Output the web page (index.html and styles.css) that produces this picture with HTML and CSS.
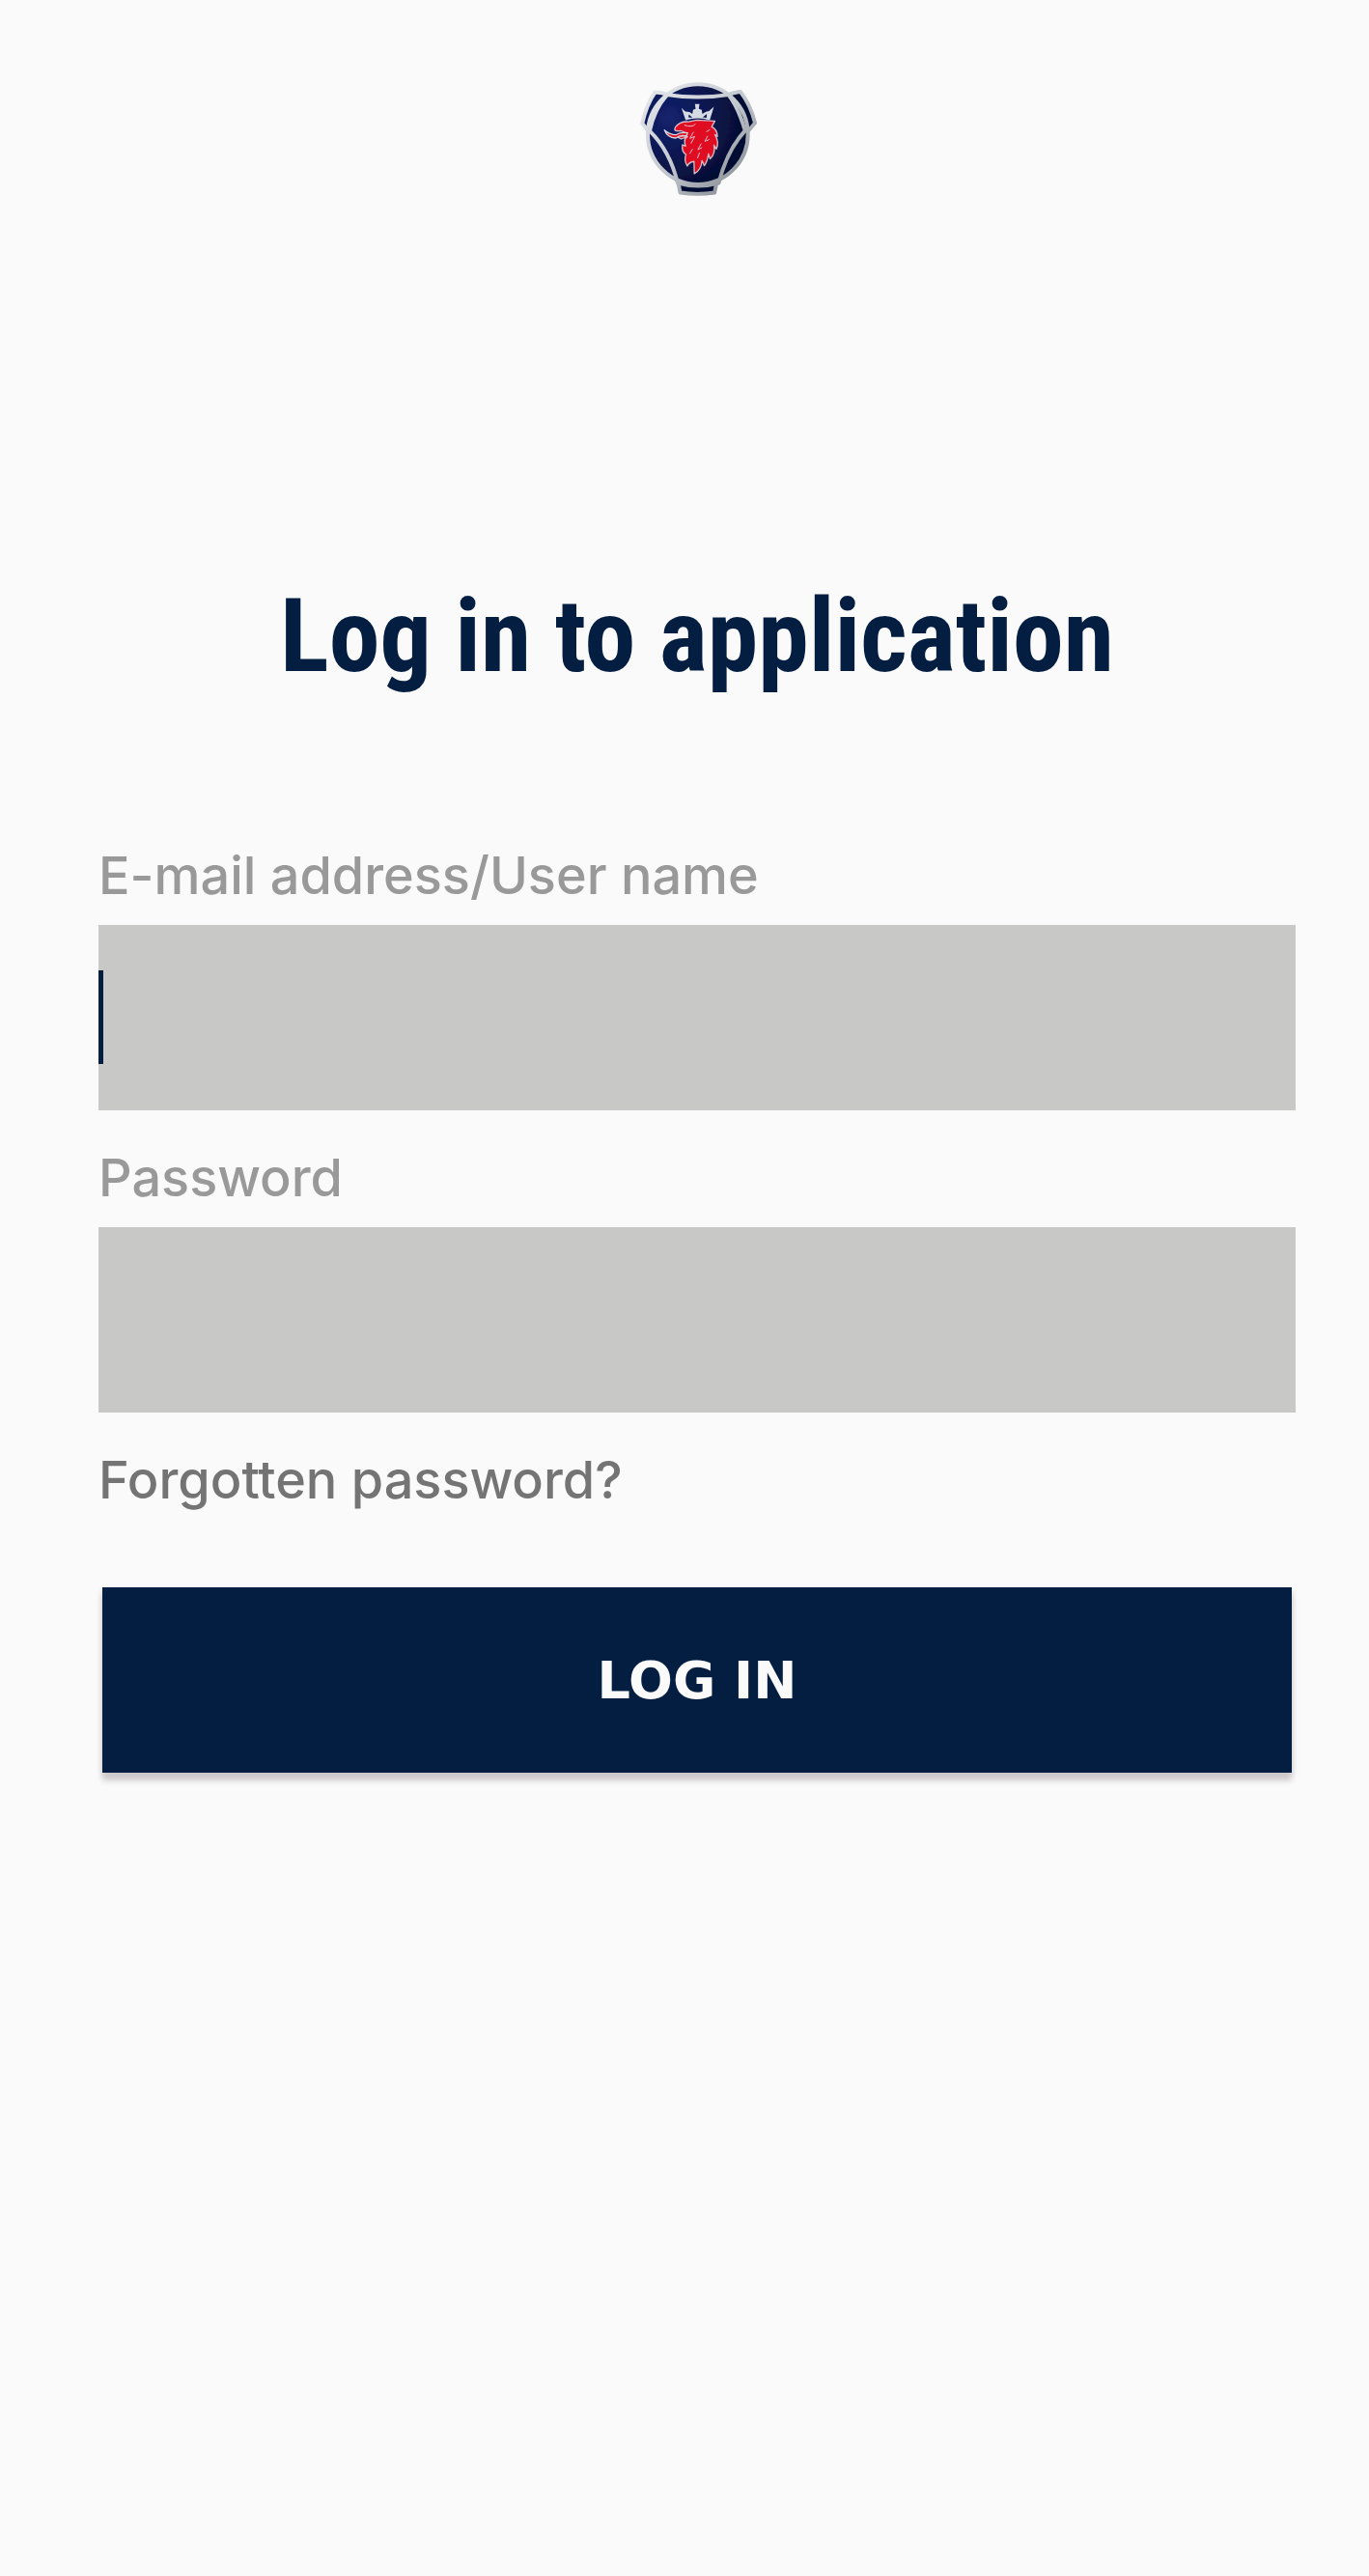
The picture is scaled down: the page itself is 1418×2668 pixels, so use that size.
FILE: index.html
```html
<!DOCTYPE html>
<html lang="en">
<head>
<meta charset="utf-8">
<meta name="viewport" content="width=device-width, initial-scale=1">
<title>Log in to application</title>
<link rel="stylesheet" href="styles.css">
</head>
<body>
<main class="login">
  <svg class="logo" viewBox="0 0 436 420" role="img" aria-label="Scania">
    <defs>
      <linearGradient id="chrome" gradientUnits="userSpaceOnUse" x1="60" y1="40" x2="380" y2="380">
        <stop offset="0" stop-color="#e6e9ec"/>
        <stop offset=".5" stop-color="#c3c8d0"/>
        <stop offset="1" stop-color="#7d8188"/>
      </linearGradient>
      <radialGradient id="navy" gradientUnits="userSpaceOnUse" cx="130" cy="140" r="230">
        <stop offset="0" stop-color="#14226c"/>
        <stop offset=".55" stop-color="#0b174f"/>
        <stop offset="1" stop-color="#050e33"/>
      </radialGradient>
      <filter id="soft">
        <feGaussianBlur stdDeviation="2"/>
      </filter>
    </defs>
    <g filter="url(#soft)">
      <g fill="url(#navy)" stroke="url(#chrome)" stroke-width="12" stroke-linejoin="round">
        <path d="M86 61Q107 61 128 70L70 190Q57 171 46 158Q58 102 86 61Z"/>
        <path d="M352 60Q332 61 311 70L371 187Q385 172 397 157Q384 102 352 60Z"/>
        <path d="M155 330L164 374Q218 382 271 374L280 330Z"/>
        <circle cx="219" cy="192" r="156"/>
        <path fill="none" d="M123 69Q218 84 314 69Q345 108 366 181Q310 242 284 344Q220 362 156 344Q132 244 69 182Q82 116 123 69Z"/>
      </g>
      <path fill="#d5dbe3" d="M181 148L168 110L180 121L193 123L202 129L204 116L212 113L210 98H224L222 113L231 116L233 129L244 122L254 120L269 106L256 148Q219 137 181 148Z"/>
      <path fill="#0b174f" d="M191 130L202 140H190ZM234 139L247 129L246 141Z"/>
      <path fill="#e00d22" stroke="#d5bcc8" stroke-width="4" stroke-linejoin="round" d="M149 170Q164 151 189 153L216 148L272 151L262 169Q279 176 280 199L272 193Q286 215 277 238L269 226Q275 252 257 269L252 253Q249 276 239 290L232 274Q230 303 208 315L207 277Q192 279 186 291Q175 272 182 255Q168 247 171 225L181 229Q172 207 187 199L167 207L153 199L180 196Q184 185 165 181Q141 185 149 170Z"/>
      <path fill="#e00d22" stroke="#d5dbe3" stroke-width="4" stroke-linejoin="round" d="M187 188Q164 184 150 194Q132 194 115 179Q124 202 150 204Q165 193 183 198Z"/>
      <path fill="none" stroke="#e0bcc8" stroke-width="3" stroke-linecap="round" d="M178 164Q202 172 211 161M205 186L194 205L209 199L198 220M229 222L219 240L231 234M249 198L241 214L254 209M194 252L202 239M218 266L224 250M246 184L256 178"/>
    </g>
  </svg>

  <h1 class="title">Log in to application</h1>

  <form class="form">
    <div class="field">
      <label class="label" for="user">E-mail address/User name</label>
      <div class="control">
        <input class="input" id="user" name="user" type="text" autocomplete="username">
        <span class="caret" aria-hidden="true"></span>
      </div>
    </div>
    <div class="field">
      <label class="label" for="password">Password</label>
      <div class="control">
        <input class="input" id="password" name="password" type="password" autocomplete="current-password">
      </div>
    </div>
    <a class="forgot" href="#">Forgotten password?</a>
    <button class="submit" type="submit">LOG IN</button>
  </form>
</main>
</body>
</html>
```
FILE: styles.css
```css
* {
  box-sizing: border-box;
}

body {
  margin: 0;
  min-height: 100vh;
  background: #fafafa;
  color: #041e42;
  font-family: Inter, "Liberation Sans", sans-serif;
}

.login {
  display: flex;
  flex-direction: column;
  align-items: center;
  padding: 75px 76px 75px 102px;
}

.logo {
  display: block;
  width: 145px;
  height: 140px;
}

.title {
  margin: 380px 0 0;
  font-family: "Roboto Condensed", "Liberation Sans Narrow", "Liberation Sans", sans-serif;
  font-size: 106px;
  font-weight: 700;
  line-height: 128px;
  text-align: center;
}

.form {
  display: flex;
  flex-direction: column;
  width: 100%;
  margin-top: 147px;
}

.field {
  display: flex;
  flex-direction: column;
  margin-bottom: 33px;
}

.label,
.forgot {
  font-size: 54px;
  font-weight: 500;
  line-height: 74px;
}

.label {
  margin-bottom: 14px;
  color: #999;
}

.control {
  position: relative;
}

.input {
  display: block;
  width: 100%;
  height: 192px;
  padding: 0 16px;
  border: 0;
  border-radius: 0;
  outline: 0;
  background: #c8c8c6;
  color: #041e42;
  font: inherit;
  font-size: 54px;
}

.caret {
  position: absolute;
  top: 47px;
  left: 0;
  width: 5px;
  height: 97px;
  background: #041e42;
}

.forgot {
  align-self: flex-start;
  color: #747474;
  text-decoration: none;
}

.submit {
  height: 192px;
  margin: 74px 4px 0;
  border: 0;
  background: #041e42;
  box-shadow: 0 8px 6px #cdc9ca, 0 2px 6px #dcdce0;
  color: #fafafa;
  font-family: "DejaVu Sans", Inter, sans-serif;
  font-size: 54px;
  font-weight: 700;
}
```
